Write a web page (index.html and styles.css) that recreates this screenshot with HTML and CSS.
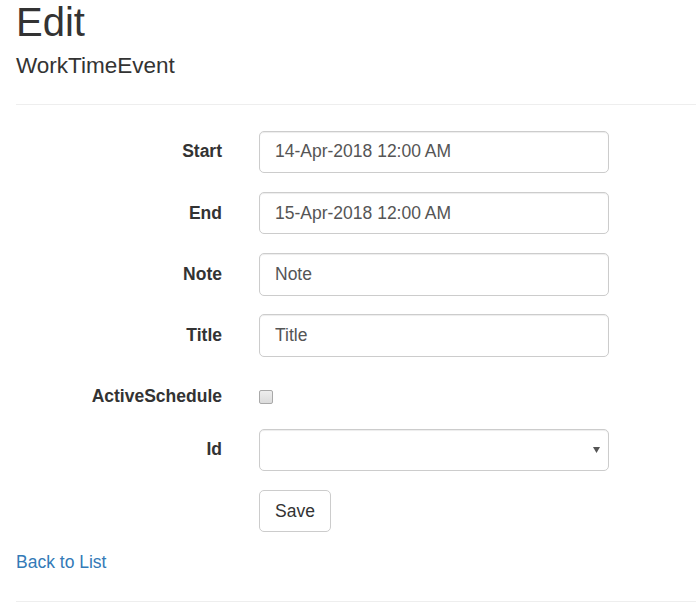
FILE: index.html
```html
<!DOCTYPE html>
<html lang="en">
<head>
<meta charset="utf-8">
<title>Edit - WorkTimeEvent</title>
<link rel="stylesheet" href="styles.css">
</head>
<body>
<div class="page">
  <h1 class="title">Edit</h1>
  <h4 class="subtitle">WorkTimeEvent</h4>
  <hr class="rule top">
  <form class="form">
    <div class="form-group">
      <label class="control-label" for="start">Start</label>
      <div class="control">
        <input class="form-control" id="start" type="text" value="14-Apr-2018 12:00 AM">
      </div>
    </div>
    <div class="form-group">
      <label class="control-label" for="end">End</label>
      <div class="control">
        <input class="form-control" id="end" type="text" value="15-Apr-2018 12:00 AM">
      </div>
    </div>
    <div class="form-group">
      <label class="control-label" for="note">Note</label>
      <div class="control">
        <input class="form-control" id="note" type="text" placeholder="Note">
      </div>
    </div>
    <div class="form-group">
      <label class="control-label" for="title">Title</label>
      <div class="control">
        <input class="form-control" id="title" type="text" placeholder="Title">
      </div>
    </div>
    <div class="form-group checkbox-group">
      <label class="control-label" for="active">ActiveSchedule</label>
      <div class="control checkbox">
        <input class="check" id="active" type="checkbox">
      </div>
    </div>
    <div class="form-group">
      <label class="control-label" for="id">Id</label>
      <div class="control">
        <div class="select-wrap">
          <select class="form-control select" id="id"><option></option></select>
          <svg class="caret" width="7" height="6" viewBox="0 0 7 6"><path d="M0 0H7L3.5 6Z" fill="#555"/></svg>
        </div>
      </div>
    </div>
    <div class="form-group last">
      <div class="control offset">
        <button class="btn" type="button">Save</button>
      </div>
    </div>
  </form>
  <div class="back"><a class="link" href="#">Back to List</a></div>
  <hr class="rule bottom">
</div>
</body>
</html>
```

FILE: styles.css
```css
html, body {
  margin: 0;
  padding: 0;
  background: #fff;
}
body {
  font-family: "Liberation Sans", Arial, sans-serif;
  font-size: 17.5px;
  line-height: 1.42857;
  color: #333;
}
.page {
  padding-left: 16px;
}
.title {
  font-size: 40px;
  font-weight: 400;
  line-height: 1.1;
  margin: 0 0 10px;
}
.subtitle {
  font-size: 22.5px;
  font-weight: 400;
  line-height: 1.1;
  margin: 0 0 12.5px;
}
.rule {
  border: 0;
  border-top: 1px solid #eee;
  margin: 25px 0 25px;
  height: 0;
}
.rule.top {
  margin-bottom: 25.75px;
}
.rule.bottom {
  margin-top: 25.5px;
}
.form {
  margin: 0;
}
.form-group {
  display: flex;
  align-items: flex-start;
  margin-bottom: 18.75px;
}
.form-group.last {
  margin-bottom: 18px;
}
.control-label {
  width: 206px;
  flex: none;
  text-align: right;
  font-weight: 700;
  padding-top: 8.75px;
  line-height: 25px;
}
.control {
  margin-left: 37px;
}
.control.offset {
  margin-left: 243px;
}
.form-control {
  display: block;
  box-sizing: border-box;
  width: 350px;
  height: 42.5px;
  padding: 7.5px 15px;
  font-family: inherit;
  font-size: 17.5px;
  line-height: 1.42857;
  color: #555;
  background: #fff;
  border: 1px solid #ccc;
  border-radius: 5px;
  box-shadow: inset 0 1px 1px rgba(0,0,0,.075);
  margin: 0;
}
.form-control::placeholder {
  color: #555;
  opacity: 1;
}
.checkbox-group {
  height: 34.25px;
}
.checkbox {
  padding-top: 14px;
}
.check {
  -webkit-appearance: none;
  appearance: none;
  display: block;
  width: 14px;
  height: 14px;
  margin: 0;
  box-sizing: border-box;
  border: 1px solid #a9a9a9;
  border-radius: 2px;
  background: linear-gradient(#eee, #dcdcdc);
}
.select-wrap {
  position: relative;
}
.select {
  -webkit-appearance: none;
  appearance: none;
  box-shadow: inset 0 1px 1px rgba(0,0,0,.075);
}
.caret {
  position: absolute;
  left: 334px;
  top: 18px;
  display: block;
}
.btn {
  display: block;
  box-sizing: border-box;
  height: 42.5px;
  padding: 7.5px 15px;
  font-family: inherit;
  font-size: 17.5px;
  line-height: 1.42857;
  color: #333;
  background: #fff;
  border: 1px solid #ccc;
  border-radius: 5px;
  margin: 0;
}
.back {
  line-height: 25px;
}
.link {
  color: #337ab7;
  text-decoration: none;
}
```
